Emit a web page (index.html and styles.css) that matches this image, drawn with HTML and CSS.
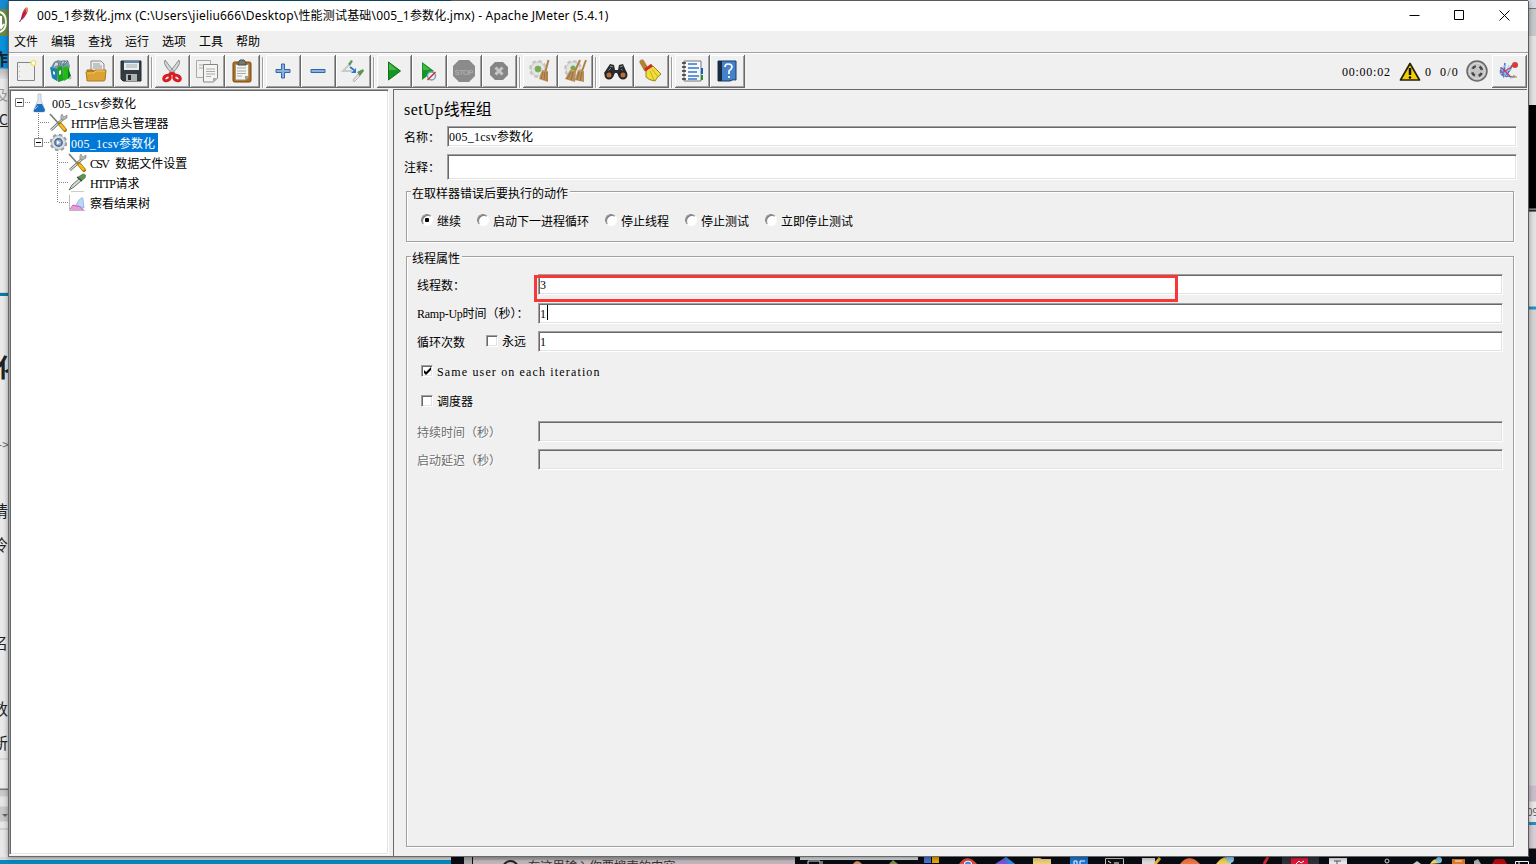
FILE: index.html
```html
<!DOCTYPE html>
<html lang="zh-CN">
<head>
    <meta charset="UTF-8">
    <meta name="viewport" content="width=device-width, initial-scale=1.0">
    <title>005_1参数化.jmx - Apache JMeter (5.4.1)</title>
    <link rel="stylesheet" href="styles.css">
</head>
<body>
    <!-- what shows behind the window -->
    <div class="left-edge">
        <svg class="app-tile" width="8" height="27"><path d="M0 3q6 2 6 10t-6 10M1 7v11M-2 15l3 4 3-4" stroke="#fff" stroke-width="2" fill="none"/></svg>
        <span class="peek p1">昨</span>
        <span class="peek p2">及</span>
        <span class="peek p3">C</span>
        <span class="peek p4">化</span>
        <span class="peek p5">-&gt;</span>
        <span class="peek p6">请</span>
        <span class="peek p7">冷</span>
        <span class="peek p8">名</span>
        <span class="peek p9">数</span>
        <span class="peek p10">新</span>
        <span class="scroll-arrow"></span>
    </div>
    <div class="right-edge"><span class="peek r1">09</span></div>
    <div class="taskbar">
        <div class="search"><i></i>在这里输入你要搜索的内容</div>
        <svg class="tasks" width="736" height="7" viewBox="0 0 736 7">
            <path d="M0 0h118v3H0z" fill="#d8dadb"/>
            <path d="M8 7V4h12v3M22 4v3" fill="none" stroke="#ddd"/>
            <path d="M53 7q4-6 9 0z" fill="#c98c62"/><path d="M89 7l4-4 5 4z" fill="#7f8b4d"/>
            <path d="M124 0h7v6h-7z" fill="#4574d6"/><path d="M132 0h7v6h-7z" fill="#e5a800"/>
            <path d="M159 7q8-12 18 0z" fill="#dc4b3e"/><circle cx="168" cy="8" r="4" fill="#4388ed" stroke="#fff"/>
            <path d="M195 7l11-7 9 7z" fill="#7656db"/><path d="M206 0l9 7h-6l-5-5z" fill="#2b8ae7"/>
            <path d="M233 1h7l2 1h9v5h-18z" fill="#ecd078"/>
            <path d="M270 0h18v7h-18z" fill="#1978d4"/><path d="M274 7V4h3v3M280 7V4h5" stroke="#fff" fill="none"/>
            <path d="M305.500 1.500h18v6h-18z" fill="#111" stroke="#ccc"/><path d="M308 4l3 2M314 6h5" stroke="#fff"/>
            <path d="M342 1h13v6h-13z" fill="#ddd"/><path d="M360 1l-5 6" stroke="#e7b83d" stroke-width="3"/>
            <path d="M380 7q9-12 20 0z" fill="#ef7542"/><path d="M416 7q9-12 15-3v3z" fill="#f0cf56"/><circle cx="430" cy="2" r="4" fill="#8bcbed"/>
            <path d="M468 0l-4 7" stroke="#d42832" stroke-width="3"/><path d="M482 0h37v7h-37z" fill="#303139"/>
            <path d="M491 1h17v6h-17z" fill="#df1938"/><path d="M496 7l3-3 2 2 3-2" stroke="#fff" fill="none"/>
            <path d="M529 1h18v6h-18z" fill="#e9e8ec"/><path d="M534 4h7M537 4v3" stroke="#555"/>
            <circle cx="587" cy="4" r="2" fill="none" stroke="#ddd"/><path d="M613 7l4-3 4 3" fill="#ccc"/>
            <path d="M630 7q5-9 11-1z" fill="#f1d867"/><circle cx="639" cy="3" r="3" fill="#83c9ea"/>
            <path d="M652 2h13v5h-13z" fill="#df7a27"/><path d="M655 4h7" stroke="#fff"/>
            <path d="M674 7V4l4-2 3 5z" fill="#aaa"/><path d="M692 7l3-5h9l3 5z" fill="#b50a0f"/>
            <path d="M715.500 7V4.500h13V7M719 4v3" fill="none" stroke="#fff"/>
        </svg>
    </div>

    <div class="window">
        <header class="titlebar">
            <svg class="feather" width="12" height="16" viewBox="0 0 12 16"><path d="M8.500.5c2.500 0 1.500 4-.5 7.500s-4 5-4.700 5.200C2.500 10 5.500 1 8.500.5z" fill="#d22549"/><path d="M8.500.5c2.500 0 1.500 3 .6 5L6.500 4.500Q7.500.8 8.500.5z" fill="#f0913d"/><path d="M8 3L3 12.500 1.500 15" stroke="#782064" fill="none"/></svg>
            <h1>005_1参数化.jmx (C:\Users\jieliu666\Desktop\性能测试基础\005_1参数化.jmx) - Apache JMeter (5.4.1)</h1>
            <div class="controls">
                <svg width="11" height="11"><path d="M.5 5.500h10" stroke="#000"/></svg>
                <svg width="11" height="11"><path d="M.5.5h9v9h-9z" fill="none" stroke="#000"/></svg>
                <svg width="11" height="11"><path d="M.5.500l10 10M10.500.500l-10 10" stroke="#000"/></svg>
            </div>
        </header>

        <nav class="menubar">
            <span>文件</span><span>编辑</span><span>查找</span><span>运行</span><span>选项</span><span>工具</span><span>帮助</span>
        </nav>

        <div class="toolbar">
            <div class="group">
                <button><svg viewBox="0 0 24 24"><path d="M3.500 3.500h17v18h-17z" fill="#f0f0ee" stroke="#858585"/><path d="M5.500 7v12" stroke="#bbb" stroke-dasharray="1 4"/><circle cx="19.500" cy="4" r="3.200" fill="#f7ed9a"/><circle cx="19.500" cy="4" r="2.300" fill="#fff" stroke="#eed94f"/></svg></button>
                <button><svg viewBox="0 0 24 24"><path d="M2 8l3-5 4-2 5 1 5-1 2 6-3 13-8 3-6-4z" fill="#7d9da8"/><path d="M4 8l2-5h3l1 5 3-6h3l-2 5 5-5" fill="#d5dde0" stroke="#5d7882"/><path d="M1 8l7 2v12l-5-3z" fill="#1b7eb4"/><path d="M8 9l5-2 2 14-6 2z" fill="#18a51d"/><path d="M14 8l5-1 1 12-5 3z" fill="#22ba16"/><path d="M19 8l3 9-3 3z" fill="#087c18"/><path d="M4 12l2 1v3l-2-1zM10 12l2-1v4l-2 1z" fill="#eee"/><path d="M20 19l3-1-2 3z" fill="#aaa"/></svg></button>
                <button><svg viewBox="0 0 24 24"><path d="M7 2h10l3 3v12H7z" fill="#eee" stroke="#888"/><path d="M9 5h7M9 7h9M9 9h9" stroke="#999"/><path d="M3 11h6l2 3h9v-3h1v8H3z" fill="#bb831f" stroke="#a8771e"/><path d="M2 13h7l2-2h11l-1 10q0 1-2 1H4q-2 0-1-2z" fill="#dba335" stroke="#af7b1e"/><path d="M3 14h7l2-2h9" stroke="#f0c872" fill="none"/></svg></button>
                <button><svg viewBox="0 0 24 24"><path d="M2 2h20v20H4l-2-2z" fill="#333c42" stroke="#242b2f"/><path d="M5 2h15v9H5z" fill="#e8edef"/><path d="M5 2h15v2H5z" fill="#6185a4"/><path d="M7 6h11M7 8h11" stroke="#aaa"/><path d="M7 15h11v7H7z" fill="#aeb4b6"/><path d="M9 16h3v5H9z" fill="#242a30"/></svg></button>
            </div>
            <div class="group">
                <button><svg viewBox="0 0 24 24"><path d="M5 1q-2 3 2 8l6 7 2-2zM19 1q2 3-2 8l-6 7-2-2z" fill="#d4d7d8" stroke="#898e8f"/><g fill="none" stroke="#d71d22" stroke-width="3"><ellipse cx="7" cy="19" rx="3.500" ry="2.500" transform="rotate(-30 7 19)"/><ellipse cx="17" cy="19" rx="3.500" ry="2.500" transform="rotate(30 17 19)"/><path d="M9 16l3-2 3 2"/></g></svg></button>
                <button><svg viewBox="0 0 24 24"><path d="M1.500 1.500h14v17h-14z" fill="#f2f2f1" stroke="#aaa"/><path d="M4 6h8M4 9h8" stroke="#aaa"/><path d="M8.500 5.500h14V19l-4 4h-10z" fill="#f5f5f3" stroke="#858585"/><path d="M11 10h9M11 12.500h9M11 15h9M11 17.500h5" stroke="#aaa"/><path d="M18 23v-4h4z" fill="#aaa"/></svg></button>
                <button><svg viewBox="0 0 24 24"><rect x="3" y="3" width="18" height="20" rx="1.500" fill="#b76e11" stroke="#724916"/><path d="M5.500 5.500h13V18l-3 3h-10z" fill="#f3f3ef" stroke="#998"/><path d="M8 4l2-3h4l2 3v2H8z" fill="#747974" stroke="#454a45"/><path d="M7 9h9M7 12h9M7 14.500h9M7 17h5" stroke="#aaa"/><path d="M15 21v-4h4z" fill="#999"/></svg></button>
            </div>
            <div class="group">
                <button><svg viewBox="0 0 24 24"><path d="M10.500 5h3v5.500H19v3h-5.500V19h-3v-5.500H5v-3h5.500z" fill="#8ab2e0" stroke="#3466a5"/></svg></button>
                <button><svg viewBox="0 0 24 24"><path d="M5 10.500h14v3H5z" fill="#8ab2e0" stroke="#3466a5"/></svg></button>
                <button><svg viewBox="0 0 24 24"><path d="M8 6L2 12h9" stroke="#c8ccc9" stroke-width="2" fill="none"/><path d="M7 5l3-4 2 1-3 5z" fill="#5e9d55"/><path d="M12 21l5-6 2 2-6 6z" fill="#dce1db" stroke="#aaa" stroke-width=".8"/><path d="M16 13l6-3 1 2-4 5z" fill="#5c9653"/><path d="M9 8l4 3" stroke="#3173c8" stroke-width="1.700"/><path d="M15 9v5h-5z" fill="#3173c8"/></svg></button>
            </div>
            <div class="group">
                <button><svg viewBox="0 0 24 24"><path d="M6.500 3l12 9-12 9z" fill="#159521" stroke="#0c7416"/><path d="M7 4l8 7H7z" fill="#48b744"/></svg></button>
                <button><svg viewBox="0 0 24 24"><path d="M5 3l12 9-12 9z" fill="#159521"/><path d="M6 5l7 6H6z" fill="#48b744"/><circle cx="14.500" cy="17" r="4" fill="#e8eef2" stroke="#7fa0be" stroke-width="1.500"/><path d="M10.500 21l8-8" stroke="#d42727" stroke-width="1.500"/></svg></button>
                <button><svg viewBox="0 0 24 24"><path d="M7 1h10l6 6v10l-6 6H7l-6-6V7z" fill="#8b8b8b"/><text x="2.500" y="15.500" textLength="19" class="stop">STOP</text></svg></button>
                <button><svg viewBox="0 0 24 24"><path d="M8 3h8l5 5v8l-5 5H8l-5-5V8z" fill="#858585"/><path d="M8.500 8.500l7 7m0-7l-7 7" stroke="#c6c6c6" stroke-width="3"/></svg></button>
            </div>
            <div class="group">
                <button><svg viewBox="0 0 24 24"><circle cx="10" cy="10" r="7.500" fill="none" stroke="#c3c6c4" stroke-width="3" stroke-dasharray="3.500 2.390"/><circle cx="10" cy="10" r="7" fill="#e3e5e2" stroke="#c3c6c4"/><circle cx="10" cy="10" r="3" fill="#66bd2b" stroke="#999"/><path d="M20.500 1l-3 11" stroke="#b28146" stroke-width="2"/><path d="M14 11l6 1v11l-9-3z" fill="#bd9358"/><path d="M15 13l-2 7m4-7l-1 8m3-8v9" stroke="#94663a" stroke-width=".8"/></svg></button>
                <button><svg viewBox="0 0 24 24"><circle cx="10" cy="10" r="7.500" fill="none" stroke="#c3c6c4" stroke-width="3" stroke-dasharray="3.500 2.390"/><circle cx="10" cy="10" r="7" fill="#e3e5e2" stroke="#c3c6c4"/><circle cx="10" cy="9" r="2.500" fill="#78a94f"/><path d="M17 1l-5 11M23 1l-4 11" stroke="#b28146" stroke-width="2"/><path d="M7 11l6 1-1 11-10-3zM15 11l6 1v11l-9-2z" fill="#b98f58"/><path d="M8 13l-4 7m6-7l-2 8m8-8l-2 8m5-8l-2 9" stroke="#8e6340" stroke-width=".8"/></svg></button>
            </div>
            <div class="group">
                <button><svg viewBox="0 0 24 24"><path d="M6 5l4 1 1 5h3l1-5 4-1 4 9-2 5-6-1-2-4h-2l-2 4-6 1-3-5z" fill="#292b2c"/><path d="M6 7l3 1M16 8l3-1M4 12l3-3M17 10l3 3" stroke="#858989"/><circle cx="5" cy="16" r="3.500" fill="#b66e3c" stroke="#252525" stroke-width="2"/><circle cx="19" cy="16" r="3.500" fill="#b66e3c" stroke="#252525" stroke-width="2"/></svg></button>
                <button><svg viewBox="0 0 24 24"><path d="M3 3l4 7" stroke="#b38236" stroke-width="5" stroke-linecap="round"/><path d="M7 11l7-4 8 8q-4 3-6 7-7-1-9-4z" fill="#f0dc3b" stroke="#9b851b"/><path d="M6 11l7-5" stroke="#c92b27" stroke-width="3"/><path d="M11 12l4 9m-2-11l6 8" stroke="#c5ae2b"/></svg></button>
            </div>
            <div class="group">
                <button><svg viewBox="0 0 24 24"><path d="M4 2h17v20H4z" fill="#f7f8fa" stroke="#777"/><path d="M2 4h4M2 8h4M2 12h4M2 16h4M2 20h4" stroke="#333" stroke-width="1.500"/><path d="M8 5h9M8 9h11M8 13h9M8 17h11M8 20h9" stroke="#3477cf" stroke-width="1.500"/><path d="M21 9h2v6h-2z" fill="#145fc5"/><path d="M21 16h2v5h-2z" fill="#209323"/></svg></button>
                <button><svg viewBox="0 0 24 24"><path d="M3 2h18v19q-3-1-6 1H3z" fill="#4582ca" stroke="#183b66"/><path d="M3 2h4v20H3z" fill="#1c2c40"/><path d="M10 8q0-3 3-3 4 0 4 3 0 2-3 4v3m0 2v2" stroke="#fff" stroke-width="1.700" fill="none"/></svg></button>
            </div>
            <div class="status">
                <span class="en clock">00:00:02</span>
                <svg class="warn" width="22" height="20" viewBox="0 0 22 20"><path d="M11 1.500L20.500 18h-19z" fill="#f3ce05" stroke="#25210c" stroke-width="1.700" stroke-linejoin="round"/><path d="M11 6v7" stroke="#111" stroke-width="2.500"/><circle cx="11" cy="15.500" r="1.300"/></svg>
                <span class="en errors">0</span>
                <span class="en threads">0/0</span>
                <svg class="remote" width="22" height="22" viewBox="0 0 22 22"><circle cx="11" cy="11" r="10" fill="#b3b3b3" stroke="#686868" stroke-width="1.500"/><circle cx="11" cy="11" r="8" fill="#c4c4c4" stroke="#ddd"/><circle cx="11" cy="11" r="5" fill="none" stroke="#464646" stroke-width="2.500" stroke-dasharray="4 3.850" stroke-dashoffset="-2"/></svg>
                <button><svg viewBox="0 0 24 24"><path d="M4 8q1 10 14 10M8 4q-2 10 2 14M15 6q-3 9-9 12" stroke="#3974d0" stroke-width="1.500" fill="none"/><path d="M3 10q-2 8 8 8V12z" fill="#527fcb"/><path d="M4 10l6 7M7 6l5 11M12 6L7 18M3 15l12-5" stroke="#9fc4f3" fill="none"/><path d="M5 9l8 8M5 14l11-7" stroke="#cb3e57" stroke-width="1.200"/><path d="M16 16l4 2-7 1" stroke="#cfa16a" fill="none"/><circle cx="18" cy="6" r="3" fill="#d63d38"/></svg></button>
            </div>
        </div>

        <div class="content">
            <aside class="tree">
                <div class="node">
                    <svg class="guide" width="19" height="20"><path class="dots" d="M14 9.500h5"/><path class="box" d="M4.500 5.500h8v8h-8z"/><path class="sign" d="M6 9.500h5"/></svg>
                    <svg class="ico" viewBox="0 0 19 20"><path d="M8 1h3v6l4 10q0 2-2 2H5q-2 0-1-3l4-9z" fill="#dce9f1" stroke="#a6bac8" stroke-width=".7"/><path d="M7 11h5l3 6q0 2-2 2H5q-2 0-1-2z" fill="#1e70bd"/><path d="M5 16l3-3" stroke="#88c4ed"/></svg>
                    <span class="label"><span class="en">005_1csv</span>参数化</span>
                </div>
                <div class="node">
                    <i class="space"></i>
                    <svg class="guide" width="19" height="20"><path class="dots" d="M8.500 0v20M10 9.500h9"/></svg>
                    <svg class="ico" viewBox="0 0 19 20"><use href="#tools"/></svg>
                    <span class="label"><span class="en http">HTTP</span>信息头管理器</span>
                </div>
                <div class="node">
                    <i class="space"></i>
                    <svg class="guide" width="19" height="20"><path class="dots" d="M8.500 0v5M14 9.500h5"/><path class="box" d="M4.500 5.500h8v8h-8z"/><path class="sign" d="M6 9.500h5"/></svg>
                    <svg class="ico" viewBox="0 0 19 20"><circle cx="9.500" cy="9.500" r="7.500" fill="none" stroke="#979c9f" stroke-width="2.500" stroke-dasharray="3.500 2.390"/><circle cx="9.500" cy="9.500" r="7" fill="#dcdfe1" stroke="#9a9fa3" stroke-width=".7"/><circle cx="9.500" cy="9.500" r="3.700" fill="#8faed2" stroke="#46638c" stroke-width="1.400"/><path d="M8 7.500l3 2-3 2z" fill="#fff"/></svg>
                    <span class="label selected"><span class="en">005_1csv</span>参数化</span>
                </div>
                <div class="node">
                    <i class="space"></i><i class="space"></i>
                    <svg class="guide" width="19" height="20"><path class="dots" d="M8.500 0v20M10 9.500h9"/></svg>
                    <svg class="ico" viewBox="0 0 19 20">
                        <g id="tools"><path d="M2 17L14 6" stroke="#5b605f" stroke-width="2.500"/><path d="M2 17L14 6" stroke="#d8dbd8" stroke-width="1.200"/><path d="M13 1q-2 2-1 5 3 2 6-1V2l-3 2-1-1z" fill="#b4b8b5" stroke="#777" stroke-width=".6"/><path d="M1 1l9 10" stroke="#777e7c" stroke-width="1.700"/><path d="M11 11l5 6" stroke="#a87605" stroke-width="4" stroke-linecap="round"/><path d="M11 11l5 6" stroke="#f2bd25" stroke-width="2.500"/></g>
                    </svg>
                    <span class="label"><span class="en csv">CSV</span> 数据文件设置</span>
                </div>
                <div class="node">
                    <i class="space"></i><i class="space"></i>
                    <svg class="guide" width="19" height="20"><path class="dots" d="M8.500 0v20M10 9.500h9"/></svg>
                    <svg class="ico" viewBox="0 0 19 20"><path d="M1 17l3-5 8-7 2 2-8 7z" fill="#d5dad5" stroke="#6c716d"/><path d="M10 4l5-3q4 0 2 4l-4 3z" fill="#59964e" stroke="#44783d" stroke-width=".6"/><path d="M9 4l5 4" stroke="#404844" stroke-width="1.500"/><path d="M3 18.500h13" stroke="#ccc"/></svg>
                    <span class="label"><span class="en http">HTTP</span>请求</span>
                </div>
                <div class="node">
                    <i class="space"></i><i class="space"></i>
                    <svg class="guide" width="19" height="20"><path class="dots" d="M8.500 0v10M10 9.500h9"/></svg>
                    <svg class="ico" viewBox="0 0 19 20"><path d="M1.500 2v15.500H17" fill="none" stroke="#bbb"/><path d="M8 12l3-5q4-4 4-1l1 9z" fill="#bcd6f3" stroke="#8bb0e2" stroke-width=".8"/><path d="M2 17l3-5q2-1 4 1 3-1 7 4z" fill="#e69bdc"/><path d="M2 16l3-4 3 1q4-1 7 4" fill="none" stroke="#cb66bd"/></svg>
                    <span class="label">察看结果树</span>
                </div>
            </aside>

            <main class="editor">
                <h2><span class="en">setUp</span>线程组</h2>
                <div class="line name"><label>名称：</label><div class="field"><span class="en">005_1csv</span>参数化</div></div>
                <div class="line comment"><label>注释：</label><div class="field"></div></div>

                <section class="panel actions">
                    <h3>在取样器错误后要执行的动作</h3>
                    <div class="radios">
                        <label><i class="radio on"></i>继续</label>
                        <label><i class="radio"></i>启动下一进程循环</label>
                        <label><i class="radio"></i>停止线程</label>
                        <label><i class="radio"></i>停止测试</label>
                        <label><i class="radio"></i>立即停止测试</label>
                    </div>
                </section>

                <section class="panel props">
                    <h3>线程属性</h3>
                    <div class="row threads-row"><label>线程数：</label><div class="field"><span class="en">3</span></div><div class="mark"></div></div>
                    <div class="row ramp"><label><span class="en ramp-up">Ramp-Up</span>时间（秒）：</label><div class="field"><span class="en">1</span><i class="caret"></i></div></div>
                    <div class="row loops"><label>循环次数</label><label class="forever"><i class="check"></i>永远</label><div class="field"><span class="en">1</span></div></div>
                    <div class="option same"><i class="check"><svg width="9" height="9"><path d="M1 3v3l2 2 5-5V0L3 5z"/></svg></i><span class="en same-user">Same user on each iteration</span></div>
                    <div class="option"><i class="check"></i>调度器</div>
                    <div class="row disabled duration"><label>持续时间（秒）</label><div class="field"></div></div>
                    <div class="row disabled"><label>启动延迟（秒）</label><div class="field"></div></div>
                </section>
            </main>
        </div>
    </div>
</body>
</html>
```
FILE: styles.css
```css
*, *:before, *:after {
    margin: 0;
    padding: 0;
    box-sizing: border-box;
}
body {
    width: 1536px;
    height: 864px;
    overflow: hidden;
    position: relative;
    background: linear-gradient(90deg, #124a6e 451px, #666 451px);
    color: #000;
    font: 12px/20px "Liberation Serif", "Noto Sans CJK SC", sans-serif;
}
svg {
    display: block;
    flex: none;
}
i {
    font-style: normal;
    flex: none;
}

/* desktop behind */
.left-edge, .right-edge {
    position: absolute;
    top: 0;
    width: 8px;
    height: 864px;
    overflow: hidden;
}
.left-edge {
    left: 0;
    background: linear-gradient(#168bd0 9px, #6c8a47 9px, #6c8a47 36px, #0a91dc 36px, #0a91dc 68px, #bbb 69px, #dedede 79px, #e9e9e9 79px, #e9e9e9 292px, #bbb 293px, #087aa6 293px, #087aa6 296px, #e9e9e9 296px, #e9e9e9 758px, #c5c5c5 759px, #ececec 760px, #ececec 788px, #777 789px, #777 790px, #c5c5c5 790px, #ccc 796px, #e4e4e4 797px, #e4e4e4 806px, #c8c8c8 807px, #c8c8c8 821px, #e8e8e8 822px, #e8e8e8 828px, #bbb 829px, #e8e8e8 830px);
}
.right-edge {
    right: 0;
    background: linear-gradient(#d5dce3 8px, #777 8px, #777 9px, #c6c9cc 9px, #c6c9cc 36px, #e3e3e3 36px, #e3e3e3 105px, #000 105px, #000 208px, #aaa 209px, #000 211px, #e2e2e2 212px, #e2e2e2 306px, #258fc4 307px, #258fc4 309px, #d5d3d4 310px, #d5d3d4 785px, #c9bdca 786px, #c9bdca 801px, #e9e7e9 802px, #e9e7e9 822px, #258fc4 822px, #258fc4 825px, #d8ced8 825px, #d8ced8 848px, #090d13 849px);
}
.app-tile {
    margin-top: 9px;
}
.peek {
    position: absolute;
    left: -8px;
    font: 16px/20px "Noto Sans CJK SC", sans-serif;
    color: #222;
    white-space: nowrap;
}
.p1 { top: 48px; font-weight: bold; }
.p2 { top: 84px; font-size: 14px; color: #999; left: -6px; }
.p3 { top: 109px; left: -1px; font-size: 14px; text-decoration: underline; }
.p4 { top: 352px; left: -3px; font-size: 25px; line-height: 28px; font-weight: bold; }
.p5 { top: 434px; left: -2px; font-size: 12px; color: #666; }
.p6 { top: 500px; }
.p7 { top: 534px; }
.p8 { top: 632px; }
.p9 { top: 698px; }
.p10 { top: 732px; }
.r1 { top: 802px; left: -1px; font-size: 10px; color: #555; }
.scroll-arrow {
    position: absolute;
    left: 2px;
    top: 814px;
    border: 3px solid transparent;
    border-top-color: #666;
}
.taskbar {
    position: absolute;
    left: 0;
    top: 857px;
    width: 1536px;
    height: 7px;
    display: flex;
    overflow: hidden;
    padding-left: 473px;
    background: linear-gradient(#d9d9d9, #d9d9d9) 0 0/451px 3px no-repeat, linear-gradient(90deg, #0889bd 451px, #090d13 451px, #090d13 464px, #aaa 464px, #aaa 472px, #090d13 472px, #090d13 473px);
}
.search {
    display: flex;
    width: 322px;
    flex: none;
    border-top: 3px solid #aaa;
    background: #c3b7be;
    color: #333;
    font: 12.3px/13px "Noto Sans CJK SC", sans-serif;
    padding-left: 11px;
    height: 22px;
}
.search i {
    width: 17px;
    height: 17px;
    border: 2px solid #222;
    border-radius: 50%;
    margin: 0 9px 0 18px;
}
.tasks {
    position: absolute;
    left: 800px;
    top: 0;
}

/* window */
.window {
    position: absolute;
    left: 8px;
    top: 1px;
    width: 1521px;
    height: 856px;
    display: flex;
    flex-direction: column;
    background: #f0f0f0;
    border-left: 1px solid #696969;
    border-right: 1px solid #5c5c5c;
    border-bottom: 1px solid #696969;
    box-shadow: 0 1px 5px rgba(0, 0, 0, .4);
}
.titlebar {
    display: flex;
    align-items: center;
    height: 30px;
    flex: none;
    background: #fff;
    padding-left: 9px;
}
.feather {
    margin-top: -2px;
}
.titlebar h1 {
    margin-left: 7px;
    font: 12px/30px "Noto Sans", "Noto Sans CJK SC", sans-serif;
    letter-spacing: .185px;
    white-space: nowrap;
}
.controls {
    display: flex;
    gap: 34px;
    margin: -2px 18px 0 auto;
}
.menubar {
    display: flex;
    gap: 13px;
    height: 21px;
    flex: none;
    padding: 0 5px;
    line-height: 20px;
    font-family: "Noto Sans CJK SC", sans-serif;
}
.toolbar {
    display: flex;
    gap: 6px;
    height: 37px;
    flex: none;
    padding: 2px 1px 0 0;
    border-top: 1px solid #a0a0a0;
    box-shadow: inset 0 1px #fff;
}
.group {
    display: flex;
    position: relative;
}
.group + .group:before {
    content: "";
    position: absolute;
    left: -4px;
    top: 2px;
    width: 2px;
    height: 31px;
    border-left: 1px solid #a0a0a0;
    border-right: 1px solid #fff;
}
.toolbar button {
    width: 35px;
    height: 33px;
    padding: 4px 5px 5px;
    border: 0;
    background: #f0f0f0;
    box-shadow: inset -1px -1px #696969, inset 1px 1px #fff, inset -2px -2px #a0a0a0;
}
.toolbar button svg {
    width: 24px;
    height: 24px;
}
.stop {
    font: bold 8px "Liberation Sans", sans-serif;
    fill: #aaa;
}
.status {
    display: flex;
    align-items: center;
    height: 33px;
    margin-left: auto;
}
.clock { width: 57px; }
.clock.en { letter-spacing: .75px; }
.warn { margin-right: 4px; }
.errors { width: 15px; }
.threads { width: 26px; }
.threads.en { letter-spacing: 1.2px; }
.remote { margin: -1px 4px 0 0; }

.content {
    display: flex;
    flex: 1;
    min-height: 0;
    margin-right: 1px;
}
.tree {
    width: 380px;
    flex: none;
    margin-bottom: 1px;
    padding: 3px 0 0 1px;
    background: #fff;
    border: 1px solid;
    border-color: #a0a0a0 #fff #fff #a0a0a0;
    box-shadow: inset 1px 1px #696969, inset -1px -1px #e3e3e3;
}
.node {
    display: flex;
    height: 20px;
}
.space {
    width: 19px;
}
.ico {
    width: 19px;
    height: 20px;
}
.dots {
    stroke: #808080;
    stroke-dasharray: 1 1;
    fill: none;
}
.box {
    stroke: #808080;
    fill: #fff;
}
.sign {
    stroke: #000;
}
.label {
    margin-left: 3px;
    line-height: 22px;
    white-space: pre;
}
.selected {
    margin-left: 2px;
    padding: 0 3px 0 1px;
    height: 19px;
    background: #0078d7;
    color: #fff;
}
.en {
    font-family: "Liberation Serif", serif;
    letter-spacing: .25px;
}
.http {
    letter-spacing: -1.4px;
    margin-right: 1px;
}
.csv {
    letter-spacing: -1.7px;
    margin-right: 4px;
}

.editor {
    flex: 1;
    margin-left: 4px;
    padding: 0 10px 0 10px;
    border-left: 1px solid #696969;
    border-top: 1px solid #696969;
}
h2 {
    height: 36px;
    padding-top: 8px;
    font: 16px/24px "Liberation Serif", "Noto Sans CJK SC", sans-serif;
}
h2 .en {
    letter-spacing: .5px;
}
.line {
    display: flex;
    line-height: 20px;
}
.line label {
    width: 43px;
    flex: none;
}
.field {
    flex: 1;
    height: 21px;
    padding: 0 1px;
    line-height: 20px;
    background: #fff;
    border: 1px solid;
    border-color: #a0a0a0 #fff #fff #a0a0a0;
    box-shadow: inset 1px 1px #696969, inset -1px -1px #e3e3e3;
}
.name {
    margin-bottom: 7px;
}
.name .field {
    line-height: 21px;
}
.name label {
    line-height: 24px;
    height: 21px;
}
.comment .field {
    height: 26px;
}
.comment label {
    line-height: 28px;
    height: 26px;
}
.panel {
    margin: 11px 3px 0 2px;
    border: 1px solid #a0a0a0;
    box-shadow: inset 1px 1px #fff, 1px 1px #fff;
}
.panel h3 {
    width: max-content;
    margin: -9px 0 0 4px;
    padding: 0 2px 0 1px;
    background: #f0f0f0;
    font: 12px/20px "Noto Sans CJK SC", sans-serif;
}
.actions {
    height: 51px;
}
.radios {
    display: flex;
    gap: 16px;
    padding: 9px 0 0 14px;
}
.radios label, .forever, .option {
    display: flex;
    align-items: center;
}
.radio {
    width: 12px;
    height: 12px;
    margin: -4px 4px 0 0;
    border: 1px solid;
    border-color: #888 #fff #fff #888;
    border-radius: 50%;
    background: #fff;
    box-shadow: inset 1px 1px #777;
}
.on {
    background: radial-gradient(circle, #000 2px, #fff 2.500px);
}
.props {
    height: 591px;
    margin-top: 14px;
}
.row {
    display: flex;
    position: relative;
    height: 21px;
    margin: 0 10px 7px;
}
.row > label {
    width: 121px;
    flex: none;
    white-space: nowrap;
    line-height: 22px;
}
.threads-row {
    margin-top: 6px;
    margin-bottom: 8px;
}
.threads-row > label {
    line-height: 24px;
}
.ramp-up {
    letter-spacing: -.25px;
}
.mark {
    position: absolute;
    left: 117px;
    top: 1px;
    width: 644px;
    height: 27px;
    border: 3px solid #fa3737;
    z-index: 1;
}
.caret {
    display: inline-block;
    width: 1px;
    height: 15px;
    background: #000;
    vertical-align: top;
    margin: 1px 0 0 1px;
}
.row.loops > label {
    width: 69px;
    line-height: 24px;
}
.row.loops > .forever {
    width: 52px;
}
.forever .check {
    margin-top: -1px;
}
.check {
    width: 12px;
    height: 12px;
    margin: -3px 4px 0 0;
    border: 1px solid;
    border-color: #a0a0a0 #fff #fff #a0a0a0;
    background: #fff;
    box-shadow: inset 1px 1px #696969, inset -1px -1px #e3e3e3;
}
.check svg {
    margin: 1px;
}
.option {
    height: 22px;
    margin: 0 14px 8px;
}
.same {
    margin-top: 9px;
}
.same-user {
    letter-spacing: 1.15px;
}
.disabled label {
    color: #6d6d6d;
    text-shadow: 1px 1px #fff;
}
.disabled .field {
    background: #f0f0f0;
}
.disabled > label {
    line-height: 24px;
}
.duration {
    margin-top: 6px;
}
```
